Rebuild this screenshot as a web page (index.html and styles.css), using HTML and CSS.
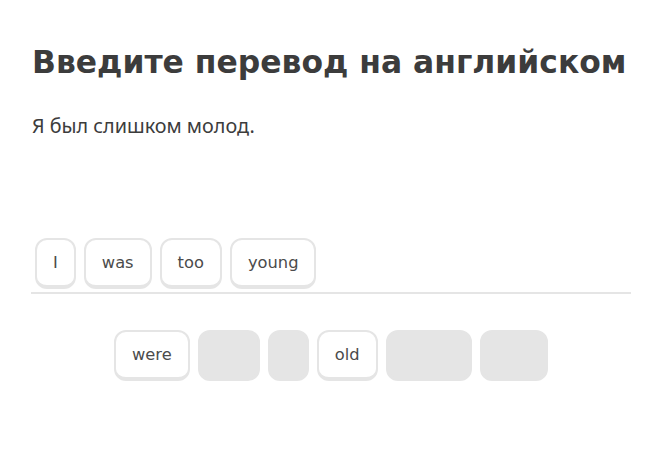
FILE: index.html
```html
<!DOCTYPE html>
<html lang="ru">
<head>
  <meta charset="UTF-8">
  <meta name="viewport" content="width=device-width, initial-scale=1.0">
  <title>Перевод</title>
  <link rel="stylesheet" href="styles.css">
</head>
<body>
  <div class="challenge">
    <h1>Введите перевод на английском</h1>
    <p class="prompt">Я был слишком молод.</p>

    <div class="answer">
      <div class="tile">I</div>
      <div class="tile">was</div>
      <div class="tile">too</div>
      <div class="tile">young</div>
    </div>

    <div class="bank">
      <div class="tile">were</div>
      <div class="tile used">too</div>
      <div class="tile used">I</div>
      <div class="tile">old</div>
      <div class="tile used">young</div>
      <div class="tile used">was</div>
    </div>
  </div>
</body>
</html>
```

FILE: styles.css
```css
/* General Styles */
body {
  margin: 0;
  padding: 0;
  background: #fff;
  color: #3c3c3c;
  font-family: 'DejaVu Sans', sans-serif;
}

/* Challenge */
.challenge {
  width: 600px;
  margin-left: 31px;
  padding-top: 42px;
}

h1 {
  font-size: 31.4px;
  font-weight: 700;
  line-height: 40px;
  margin: 0 0 0 1px;
  white-space: nowrap;
  color: #3c3c3c;
}

.prompt {
  font-family: 'Noto Sans', sans-serif;
  font-size: 19.8px;
  line-height: 24px;
  margin: 32px 0 0 1px;
  color: #3c3c3c;
}

/* Answer line */
.answer {
  display: flex;
  gap: 8px;
  margin-top: 100px;
  padding: 0 4px 3px;
  border-bottom: 2px solid #e5e5e5;
}

.bank {
  display: flex;
  justify-content: center;
  gap: 8px;
  margin-top: 36px;
}

/* Tiles */
.tile {
  font-size: 16.3px;
  line-height: 21px;
  color: #4b4b4b;
  padding: 12px 16px;
  border: 2px solid #e5e5e5;
  border-bottom-width: 4px;
  border-radius: 12px;
  background: #fff;
  white-space: nowrap;
}

.tile.used {
  color: transparent;
  background: #e5e5e5;
  border-color: #e5e5e5;
}
```
